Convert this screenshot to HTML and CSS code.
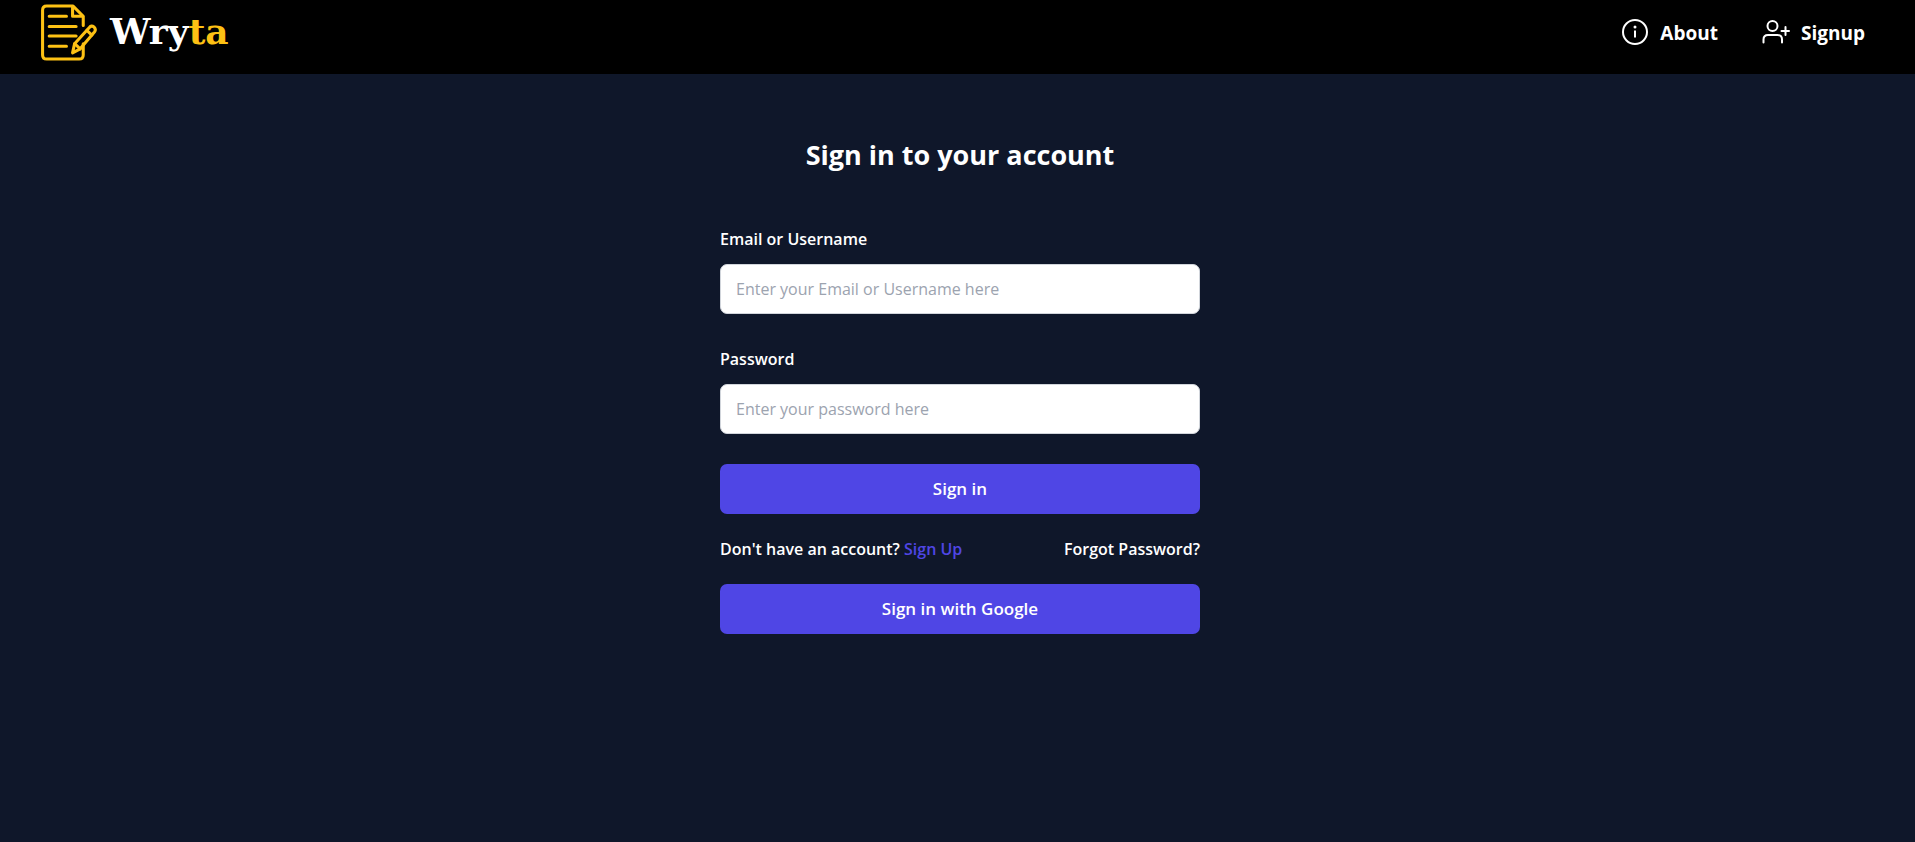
FILE: index.html
```
<!DOCTYPE html>
<html lang="en">
<head>
<meta charset="utf-8">
<meta name="viewport" content="width=device-width, initial-scale=1">
<title>Wryta</title>
<link rel="stylesheet" href="styles.css">
</head>
<body>
<header class="topbar">
  <a class="brand" href="#">
    <svg class="brand-icon" viewBox="0 0 56 60" fill="none" stroke="currentColor" stroke-width="3" stroke-linecap="round" stroke-linejoin="round" aria-hidden="true">
      <path d="M42.500 24V15L32.500 5H6.500Q2.500 5 2.500 9V53Q2.500 57 6.500 57H38.500Q42.500 57 42.500 53V42"/>
      <path d="M32 6V15H42"/>
      <path d="M9 15H26M9 25H35.500M9 34.500H35.500M9 44.500H26"/>
      <path d="M32 51L34 42L48.500 26Q50.500 23.500 53 25.500Q55.500 28 53.500 30.500L39.500 47Z"/>
      <path d="M34 42L39.500 47M46 29L51 33.500"/>
    </svg>
    <span class="brand-name">Wry<span class="brand-accent">ta</span></span>
  </a>
  <nav class="nav">
    <a class="nav-link" href="#">
      <svg class="nav-icon" viewBox="0 0 28 28" fill="none" stroke="currentColor" stroke-width="2" aria-hidden="true">
        <circle cx="14" cy="13" r="12"/>
        <path d="M14 11.500V18.500"/>
        <circle cx="14" cy="8" r="1.500" fill="currentColor" stroke="none"/>
      </svg>
      About
    </a>
    <a class="nav-link" href="#">
      <svg class="nav-icon" viewBox="0 0 28 28" fill="none" stroke="currentColor" stroke-width="2" stroke-linecap="round" aria-hidden="true">
        <circle cx="10.500" cy="7" r="5"/>
        <path d="M1.500 23.500V20.500Q1.500 16 6 16H15.500Q20 16 20 20.500V23.500"/>
        <path d="M23.500 8V16M19.500 12H27"/>
      </svg>
      Signup
    </a>
  </nav>
</header>
<div class="page">
  <main class="signin">
    <h1 class="title">Sign in to your account</h1>
    <form class="form">
      <div class="field">
        <label for="login">Email or Username</label>
        <input class="input" id="login" type="text" placeholder="Enter your Email or Username here">
      </div>
      <div class="field">
        <label for="password">Password</label>
        <input class="input" id="password" type="password" placeholder="Enter your password here">
      </div>
      <button class="button" type="submit">Sign in</button>
    </form>
    <div class="links">
      <p class="prompt">Don't have an account? <a class="signup" href="#">Sign Up</a></p>
      <a class="forgot" href="#">Forgot Password?</a>
    </div>
    <button class="button" type="button">Sign in with Google</button>
  </main>
</div>
</body>
</html>
```
FILE: styles.css
```
* { box-sizing: border-box; }
body {
  margin: 0;
  min-height: 100vh;
  background: #0f172a;
  color: #fff;
  font: 600 16px/30px "Open Sans", "Noto Sans", sans-serif;
}
a { color: inherit; text-decoration: none; }
.topbar {
  display: flex;
  align-items: flex-start;
  justify-content: space-between;
  height: 74px;
  padding: 0 50px 0 40px;
  background: #000;
}
.brand { display: flex; align-items: center; gap: 13px; }
.brand-icon { width: 57px; height: 61px; color: #fdc114; }
.brand-name { font: 700 36px/62px "DejaVu Serif", serif; }
.brand-accent { color: #fdc114; }
.nav { display: flex; gap: 44px; padding-top: 18px; }
.nav-link {
  display: flex;
  align-items: center;
  gap: 11px;
  font-size: 19px;
  font-weight: 700;
}
.nav-icon { width: 28px; height: 28px; }
.page { padding: 60px 0 60px 5px; }
.signin {
  display: flex;
  flex-direction: column;
  gap: 20px;
  width: 100%;
  max-width: 480px;
  margin: 0 auto;
}
.title {
  margin: 0 0 28px;
  text-align: center;
  font-size: 27px;
  line-height: 42px;
  font-weight: 700;
}
.form { display: flex; flex-direction: column; gap: 30px; }
.field { display: flex; flex-direction: column; gap: 10px; }
.input {
  width: 100%;
  height: 50px;
  padding: 0 15px;
  border: 1px solid #d1d5db;
  border-radius: 7px;
  background: #fff;
  color: #111827;
  font: inherit;
  font-weight: 400;
}
.input::placeholder { color: #9ca3af; opacity: 1; }
.button {
  height: 50px;
  padding: 0 15px;
  border: 0;
  border-radius: 7px;
  background: #4f46e5;
  color: #fff;
  font: inherit;
  font-size: 17px;
  cursor: pointer;
}
.links { display: flex; justify-content: space-between; }
.prompt { margin: 0; }
.signup { color: #4f46e5; }
```
